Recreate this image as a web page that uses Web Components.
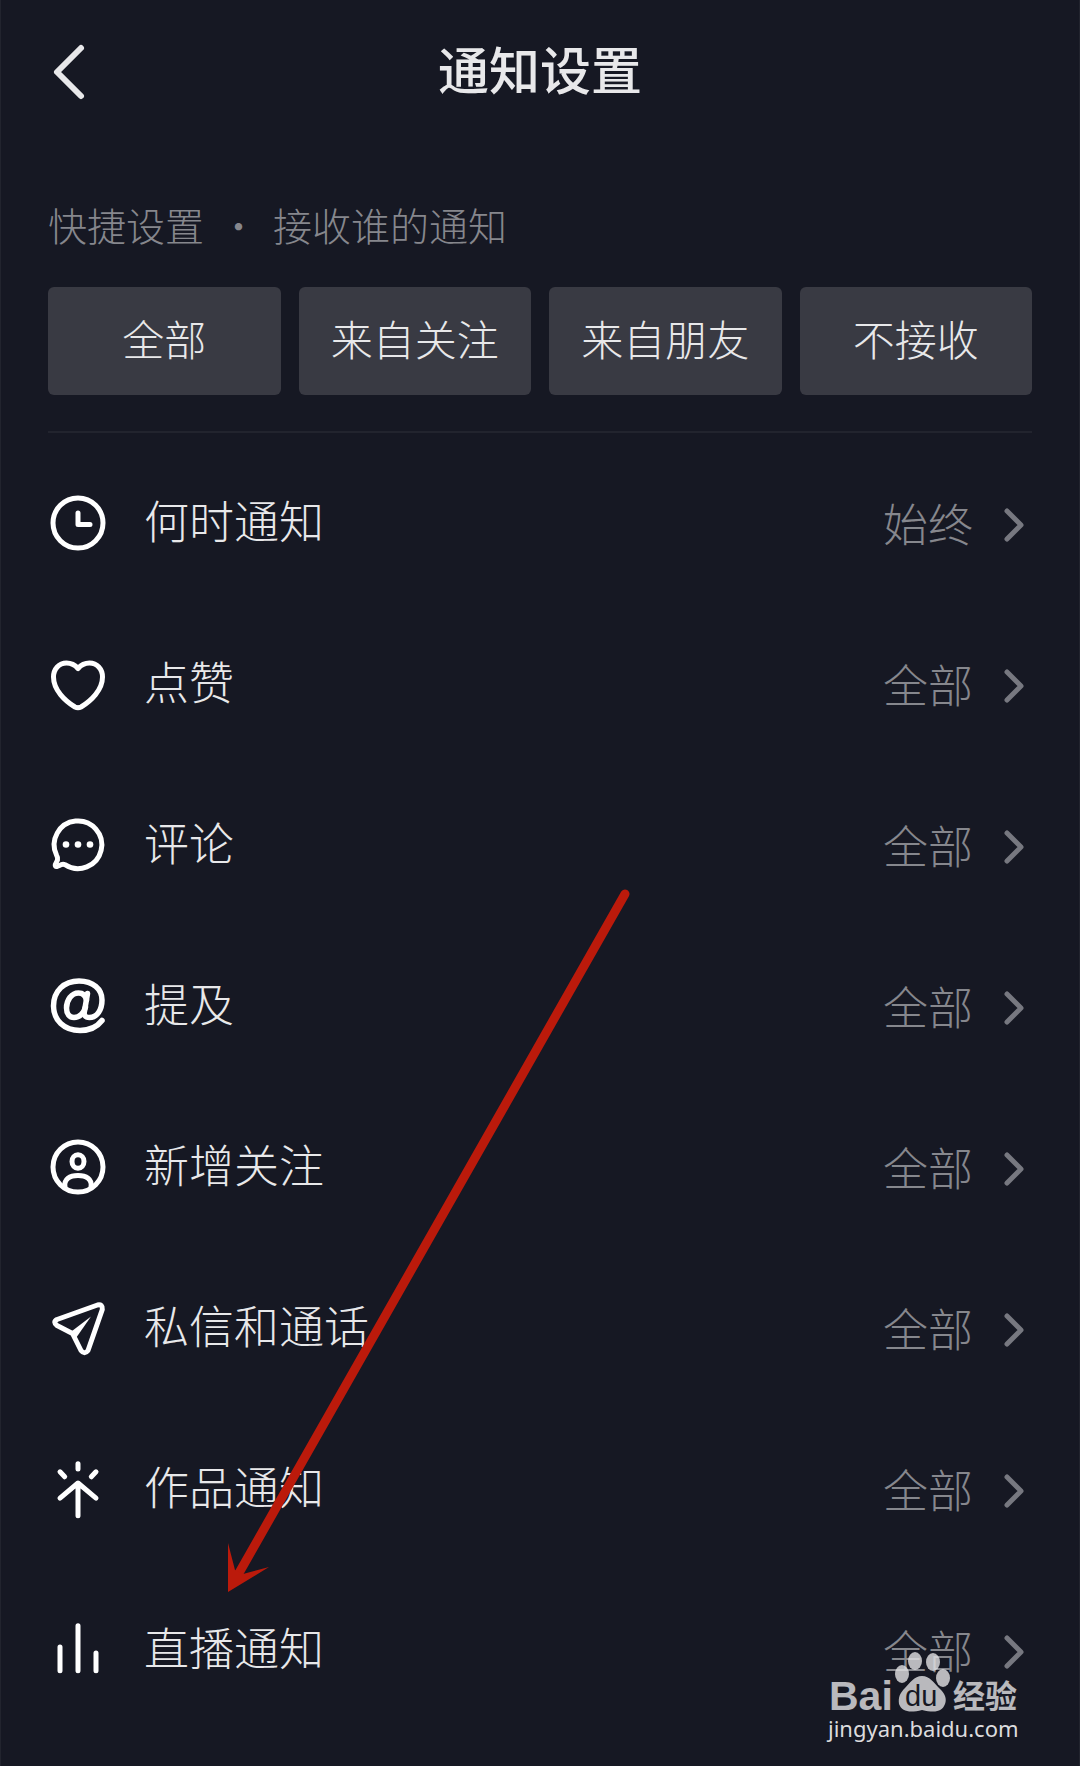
<!DOCTYPE html>
<html lang="zh-CN">
<head>
<meta charset="utf-8">
<meta name="viewport" content="width=device-width, initial-scale=1">
<title>通知设置</title>
<style>
  body {
    margin: 0;
    background: #161823;
    color: #e8e8ea;
    font-family: "Noto Sans CJK SC", sans-serif;
    font-weight: 300;
  }
</style>
</head>
<body>
<notice-page>
  <page-header>通知设置</page-header>
  <quick-settings>
    <quick-option>全部</quick-option>
    <quick-option>来自关注</quick-option>
    <quick-option>来自朋友</quick-option>
    <quick-option>不接收</quick-option>
  </quick-settings>
  <setting-row icon="clock" value="始终">何时通知</setting-row>
  <setting-row icon="heart" value="全部">点赞</setting-row>
  <setting-row icon="comment" value="全部">评论</setting-row>
  <setting-row icon="at" value="全部">提及</setting-row>
  <setting-row icon="person" value="全部">新增关注</setting-row>
  <setting-row icon="plane" value="全部">私信和通话</setting-row>
  <setting-row icon="burst" value="全部">作品通知</setting-row>
  <setting-row icon="bars" value="全部">直播通知</setting-row>
  <pointer-arrow slot="overlay"></pointer-arrow>
  <site-mark slot="overlay"></site-mark>
</notice-page>

<script>
const icons = {
  clock: `<circle cx="30" cy="30" r="25"/><path d="M30 20V31.5H42"/>`,
  heart: `<path d="M30 14.5C27 11 23 9 18.5 9C11 9 5.5 15 5.5 23C5.5 36 17 47 27 53Q30 54.6 33 53C43 47 54.5 36 54.5 23C54.5 15 49 9 41.5 9C37 9 33 11 30 14.5Z"/>`,
  comment: `<path d="M8.5 40A23.8 23.8 0 1 1 17 49.7Q14.5 48.5 11.5 50.5L9 51.5Q6.8 52 7.3 49.5L9.5 45Q10 42.5 8.5 40Z"/>
    <g fill="#fff" stroke="none"><circle cx="18" cy="29.5" r="3.3"/><circle cx="30" cy="29.5" r="3.3"/><circle cx="42" cy="29.5" r="3.3"/></g>`,
  at: `<path stroke-width="5.5" d="M54 44.5C49 51 41 54.5 32 54.5C16 54.5 5.5 44 5.5 30C5.5 15 16 5 31 5C45 5 54 13 54 24C54 34 49 41.5 41.5 41.5C37 41.5 35.5 39 36.5 35L39.5 17.5"/>
    <path stroke-width="5.5" d="M38.5 24C37.5 19.5 34.5 17 30.5 17C23.5 17 18.5 24 18.5 32C18.5 38 21.5 41.5 26 41.5C31.5 41.5 36 37 37.5 31"/>`,
  person: `<circle cx="30" cy="30" r="25"/><ellipse cx="30" cy="24.5" rx="6" ry="6.7"/><path d="M17 50C15.5 42 22 38.5 30 38.5C38 38.5 44.5 42 43 50"/>`,
  plane: `<path d="M49.5 7L9 21.5Q4.5 24 9 27.5L24.5 35.5L33 52.5Q36.5 57 40 52.5L54.3 11.5Q54.8 6 49.5 7Z"/>
    <path d="M43 18.5L28 40L22 34.5Z" fill="#fff" stroke="none"/>`,
  burst: `<path d="M30 4.7V10M12 12.8L16.7 17.8M48 12.8L43.3 17.8M12 39.2L30 24L48 39.2M30 25V56.7"/>`,
  bars: `<path d="M12 27V50.7M30 5.7V50.7M48 33V50.7"/>`
};

customElements.define('notice-page', class NoticePage extends HTMLElement {
  constructor() {
    super();
    this.attachShadow({mode: 'open'});
    this.shadowRoot.innerHTML = this.template;
  }
  get template() {
    return `<style>
      :host {
        display: block;
        position: relative;
        box-sizing: border-box;
        min-height: 100vh;
        padding: 0 47px 35px;
        border: solid #22242e;
        border-width: 0 1px;
      }
      main {
        display: flex;
        flex-direction: column;
      }
    </style>
    <main><slot></slot></main>
    <slot name="overlay"></slot>
    `
  }
});

customElements.define('page-header', class PageHeader extends HTMLElement {
  constructor() {
    super();
    this.attachShadow({mode: 'open'});
    this.shadowRoot.innerHTML = this.template;
  }
  get template() {
    return `<style>
      :host {
        display: block;
      }
      header {
        display: grid;
        grid-template-columns: 1fr auto 1fr;
        align-items: center;
        height: 144px;
      }
      button {
        justify-self: start;
        display: flex;
        padding: 0;
        border: 0;
        background: none;
      }
      h1 {
        margin: 0;
        padding-bottom: 8px;
        font-size: 51px;
        line-height: 64px;
        font-weight: 500;
      }
    </style>
    <header>
      <button aria-label="返回">
        <svg width="42" height="60" viewBox="0 0 42 60" fill="none" stroke="#e8e8ea" stroke-width="6" stroke-linecap="round" stroke-linejoin="round"><path d="M33 6L9 30L33 54"/></svg>
      </button>
      <h1><slot></slot></h1>
    </header>
    `
  }
});

customElements.define('quick-settings', class QuickSettings extends HTMLElement {
  constructor() {
    super();
    this.attachShadow({mode: 'open'});
    this.shadowRoot.innerHTML = this.template;
  }
  get template() {
    return `<style>
      :host {
        display: block;
        margin-bottom: 9px;
        padding: 50px 0 36px;
        border-bottom: 2px solid #22242e;
      }
      h2 {
        display: flex;
        gap: 15px;
        margin: 0 0 33px;
        color: #86878d;
        font-size: 39px;
        line-height: 60px;
        font-weight: 300;
      }
      .options {
        display: grid;
        grid-template-columns: repeat(4, 1fr);
        gap: 18px;
      }
    </style>
    <h2><span>快捷设置</span><span>·</span><span>接收谁的通知</span></h2>
    <div class="options"><slot></slot></div>
    `
  }
});

customElements.define('quick-option', class QuickOption extends HTMLElement {
  constructor() {
    super();
    this.attachShadow({mode: 'open'});
    this.shadowRoot.innerHTML = this.template;
  }
  get template() {
    return `<style>
      :host {
        display: block;
      }
      button {
        width: 100%;
        height: 108px;
        padding: 0 0 6px;
        border: 0;
        border-radius: 6px;
        background: #393a43;
        color: #e8e8ea;
        font: inherit;
        font-size: 42px;
        line-height: 60px;
      }
    </style>
    <button><slot></slot></button>
    `
  }
});

customElements.define('setting-row', class SettingRow extends HTMLElement {
  constructor() {
    super();
    this.attachShadow({mode: 'open'});
    this.shadowRoot.innerHTML = this.template;
  }
  get template() {
    return `<style>
      :host {
        display: block;
      }
      button {
        display: flex;
        align-items: center;
        width: 100%;
        height: 161px;
        padding: 0;
        border: 0;
        background: none;
        color: #e8e8ea;
        font: inherit;
        font-size: 45px;
        line-height: 60px;
        text-align: left;
      }
      .label {
        flex: 1;
        padding: 0 0 6px 36px;
      }
      .value {
        color: #86878d;
      }
      .chevron {
        margin: 4px 6px 0 29px;
      }
    </style>
    <button>
      <svg width="60" height="60" viewBox="0 0 60 60" fill="none" stroke="#fff" stroke-width="5" stroke-linecap="round" stroke-linejoin="round">${icons[this.getAttribute('icon')]}</svg>
      <span class="label"><slot></slot></span>
      <span class="value">${this.getAttribute('value')}</span>
      <svg class="chevron" width="24" height="36" viewBox="0 0 24 36" fill="none" stroke="#777880" stroke-width="5" stroke-linecap="round" stroke-linejoin="round"><path d="M5 4L19 18L5 32"/></svg>
    </button>
    `
  }
});

// red arrow that lies over the list
customElements.define('pointer-arrow', class PointerArrow extends HTMLElement {
  constructor() {
    super();
    this.attachShadow({mode: 'open'});
    this.shadowRoot.innerHTML = this.template;
  }
  get template() {
    return `<style>
      :host {
        position: absolute;
        top: 880px;
        left: 220px;
        pointer-events: none;
      }
      svg {
        display: block;
      }
    </style>
    <svg width="420" height="720" viewBox="221 880 420 720" fill="#bb1a0b">
      <path d="M625 894L239 1573" stroke="#bb1a0b" stroke-width="9" stroke-linecap="round"/>
      <path d="M228 1592V1543L235 1570L243 1574L269 1567Z"/>
    </svg>
    `
  }
});

customElements.define('site-mark', class SiteMark extends HTMLElement {
  constructor() {
    super();
    this.attachShadow({mode: 'open'});
    this.shadowRoot.innerHTML = this.template;
  }
  get template() {
    return `<style>
      :host {
        position: absolute;
        right: 53px;
        bottom: 24px;
      }
      a {
        display: flex;
        flex-direction: column;
        color: #dcdcde;
        text-decoration: none;
        font: 400 22px/28px "Noto Sans", sans-serif;
      }
      svg {
        display: block;
        margin-bottom: -8px;
        opacity: 0.8;
      }
      .bai {
        font: 700 41px "Liberation Sans", sans-serif;
      }
      .du {
        font: 400 29px "Liberation Sans", sans-serif;
      }
      .jy {
        font: 700 32px "Noto Sans CJK SC", sans-serif;
      }
    </style>
    <a href="#">
      <svg width="198" height="74" viewBox="828 1648 198 74" fill="#e2e2e4">
        <text class="bai" x="829" y="1710">Bai</text>
        <ellipse cx="902" cy="1674" rx="7" ry="9"/>
        <ellipse cx="915" cy="1661" rx="7" ry="9"/>
        <ellipse cx="933" cy="1662" rx="7" ry="9"/>
        <ellipse cx="943" cy="1678" rx="7" ry="9"/>
        <path d="M922 1676C930 1676 934 1683 939 1688C945 1693 947 1699 945 1704C942 1712 935 1713 922 1710C910 1713 902 1712 899 1704C898 1697 900 1693 905 1688C910 1683 914 1676 922 1676Z"/>
        <text class="du" x="905" y="1706" fill="#161823">du</text>
        <text class="jy" x="953" y="1708">经验</text>
      </svg>
      <span>jingyan.baidu.com</span>
    </a>
    `
  }
});
</script>
</body>
</html>
